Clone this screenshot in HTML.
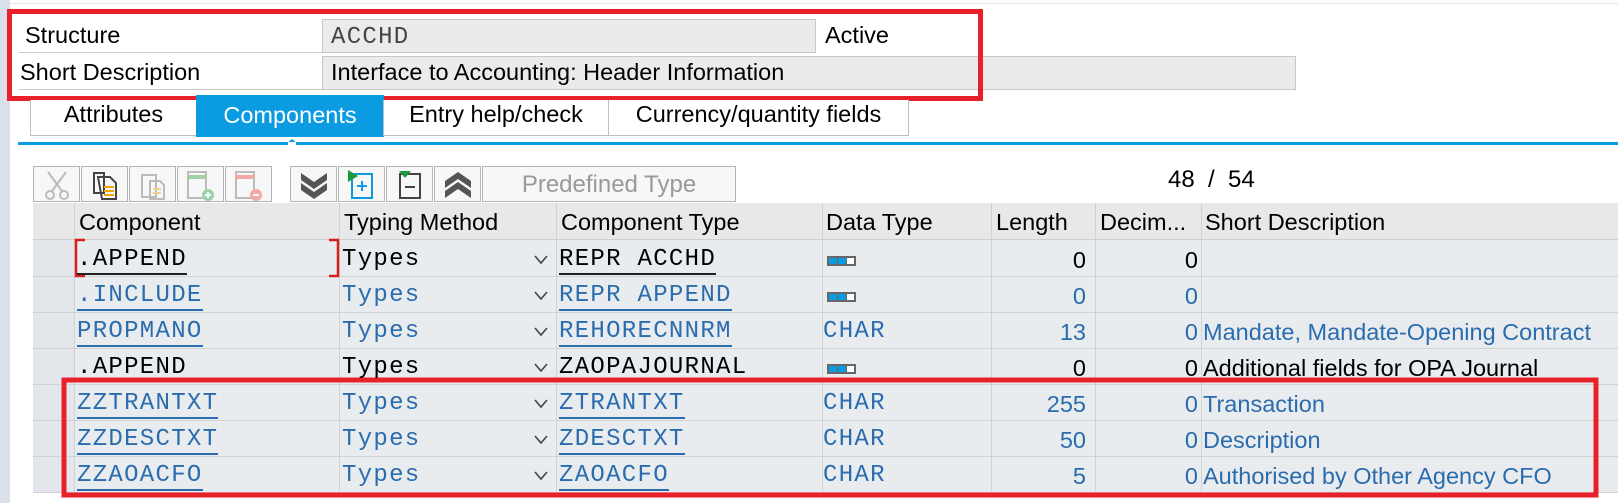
<!DOCTYPE html>
<html><head><meta charset="utf-8"><style>
*{margin:0;padding:0;box-sizing:border-box}
body{width:1618px;height:503px;background:#fff;position:relative;overflow:hidden;font-family:"Liberation Sans",sans-serif;font-size:23.5px;color:#000}
.a{position:absolute}
.mono{font-family:"Liberation Mono",monospace;font-size:24px;letter-spacing:1.3px}
.lbl{position:absolute;line-height:33px;white-space:nowrap}
.inp{position:absolute;background:#ebebeb;border:1px solid #c8c8c8;line-height:31px;padding-left:8px;white-space:nowrap}
.tab{position:absolute;top:100px;height:36px;border:1px solid #bfbfbf;border-top:none;background:#fff;line-height:28px;text-align:center}
.btn{position:absolute;top:166px;width:47px;height:36px;border:1px solid #b5b5b5;background:#f7f7f7}
.cell{position:absolute;height:36px;line-height:40px;white-space:nowrap}
.hd{line-height:36px}
.lnk{color:#2a6cad;border-bottom:2px solid #2a6cad}
.blk{border-bottom:2px solid #222}
.blue{color:#2a6cad}
</style></head><body>
<div class="a" style="left:0;top:0;width:10px;height:503px;background:#dbe0ea"></div>
<div class="a" style="left:10px;top:3px;width:1608px;height:1px;background:#e4e4e4"></div>

<div class="lbl" style="left:25px;top:19px">Structure</div>
<div class="a" style="left:18px;top:52px;width:304px;height:1px;background:#ccc"></div>
<div class="lbl" style="left:20px;top:56px">Short Description</div>
<div class="a" style="left:18px;top:89px;width:304px;height:1px;background:#ccc"></div>
<div class="inp mono" style="left:322px;top:19px;width:494px;height:34px;color:#444;line-height:35px">ACCHD</div>
<div class="lbl" style="left:825px;top:19px">Active</div>
<div class="inp" style="left:322px;top:56px;width:974px;height:34px">Interface to Accounting: Header Information</div>
<div class="a" style="left:7px;top:9px;width:976px;height:92px;border:5px solid #e8202a"></div>

<div class="tab" style="left:30px;width:167px">Attributes</div>
<div class="tab" style="left:196px;top:95px;height:42px;width:188px;background:#0a9be0;border:none;color:#fff;line-height:40px">Components</div>
<div class="tab" style="left:383px;width:226px">Entry help/check</div>
<div class="tab" style="left:608px;width:301px">Currency/quantity fields</div>
<div class="a" style="left:18px;top:142px;width:1600px;height:3px;background:#0a9be0"></div>
<div class="a" style="left:286px;top:139px;width:0;height:0;border-left:6px solid transparent;border-right:6px solid transparent;border-bottom:5px solid #0a9be0"></div>
<div class="a" style="left:288px;top:142px;width:8px;height:3px;background:#fff"></div>

<div class="btn" style="left:33px"><svg width="47" height="36"><g stroke="#bbb" stroke-width="2" fill="none"><path d="M14 5 L28 24 M32 5 L18 24"/><circle cx="16" cy="28" r="4"/><circle cx="30" cy="28" r="4"/></g></svg></div>
<div class="btn" style="left:81px"><svg width="47" height="36"><g stroke="#444" stroke-width="2" fill="none"><path d="M12 6h10v20h-10z M16 10h12l6 6v16h-14z"/></g><path d="M22 20h10M22 24h10M22 28h10" stroke="#f0a500" stroke-width="2"/></svg></div>
<div class="btn" style="left:129px"><svg width="47" height="36"><g stroke="#bbb" stroke-width="2" fill="none"><path d="M12 8h14v22h-14z M20 14h10l4 4v14h-14z"/></g><path d="M23 22h8M23 26h8" stroke="#eed48a" stroke-width="2"/></svg></div>
<div class="btn" style="left:177px"><svg width="47" height="36"><rect x="10" y="5" width="18" height="26" fill="none" stroke="#bbb" stroke-width="2"/><path d="M10 10h18" stroke="#9ed1a8" stroke-width="4"/><circle cx="30" cy="28" r="6" fill="#9ed1a8"/><path d="M27 28h6M30 25v6" stroke="#fff" stroke-width="2"/></svg></div>
<div class="btn" style="left:225px"><svg width="47" height="36"><rect x="10" y="5" width="18" height="26" fill="none" stroke="#bbb" stroke-width="2"/><path d="M10 10h18" stroke="#f0a8a8" stroke-width="4"/><circle cx="30" cy="28" r="6" fill="#f0a8a8"/><path d="M27 28h6" stroke="#fff" stroke-width="2"/></svg></div>

<div class="btn" style="left:290px"><svg width="47" height="36"><path d="M10 6l13 9 13-9v7l-13 9-13-9z M10 16l13 9 13-9v7l-13 9-13-9z" fill="#555"/></svg></div>
<div class="btn" style="left:338px"><svg width="47" height="36"><rect x="13" y="7" width="20" height="24" fill="none" stroke="#0a9be0" stroke-width="2"/><path d="M18 19h10M23 14v10" stroke="#0a9be0" stroke-width="2"/><path d="M9 3l10 6-10 6z" fill="#1a9a3a"/></svg></div>
<div class="btn" style="left:386px"><svg width="47" height="36"><rect x="13" y="7" width="20" height="24" fill="none" stroke="#444" stroke-width="2"/><path d="M18 20h10" stroke="#444" stroke-width="2"/><path d="M12 4h12l-6 7z" fill="#1a9a3a"/></svg></div>
<div class="btn" style="left:434px"><svg width="47" height="36"><path d="M10 14l13-9 13 9v7l-13-9-13 9z M10 24l13-9 13 9v7l-13-9-13 9z" fill="#555"/></svg></div>
<div class="btn" style="left:482px;width:254px;color:#999;text-align:center;line-height:36px;font-size:24px">Predefined Type</div>
<div class="lbl" style="left:1168px;top:163px;font-size:24px">48&nbsp;&nbsp;/&nbsp;&nbsp;54</div>

<!-- grid -->
<div class="a" style="left:33px;top:203px;width:1585px;height:37px;background:#e8e8e8;border-bottom:1px solid #cfcfcf"></div>
<div class="a" style="left:33px;top:240px;width:1585px;height:253px;background:#e9ecef"></div>
<div class="a" style="left:33px;top:240px;width:41px;height:253px;background:#e3e6ea"></div>
<div class="a" style="left:74px;top:203px;width:1px;height:290px;background:#d2d2d2"></div>
<div class="a" style="left:339px;top:203px;width:1px;height:290px;background:#d2d2d2"></div>
<div class="a" style="left:556px;top:203px;width:1px;height:290px;background:#d2d2d2"></div>
<div class="a" style="left:822px;top:203px;width:1px;height:290px;background:#d2d2d2"></div>
<div class="a" style="left:991px;top:203px;width:1px;height:290px;background:#d2d2d2"></div>
<div class="a" style="left:1095px;top:203px;width:1px;height:290px;background:#d2d2d2"></div>
<div class="a" style="left:1201px;top:203px;width:1px;height:290px;background:#d2d2d2"></div>
<div class="a" style="left:33px;top:276px;width:1585px;height:1px;background:#d2d2d2"></div>
<div class="a" style="left:33px;top:312px;width:1585px;height:1px;background:#d2d2d2"></div>
<div class="a" style="left:33px;top:348px;width:1585px;height:1px;background:#d2d2d2"></div>
<div class="a" style="left:33px;top:384px;width:1585px;height:1px;background:#d2d2d2"></div>
<div class="a" style="left:33px;top:420px;width:1585px;height:1px;background:#d2d2d2"></div>
<div class="a" style="left:33px;top:456px;width:1585px;height:1px;background:#d2d2d2"></div>
<div class="a" style="left:33px;top:492px;width:1585px;height:1px;background:#d2d2d2"></div>

<div class="cell hd" style="left:79px;top:204px">Component</div>
<div class="cell hd" style="left:344px;top:204px">Typing Method</div>
<div class="cell hd" style="left:561px;top:204px">Component Type</div>
<div class="cell hd" style="left:826px;top:204px">Data Type</div>
<div class="cell hd" style="left:996px;top:204px">Length</div>
<div class="cell hd" style="left:1100px;top:204px">Decim...</div>
<div class="cell hd" style="left:1205px;top:204px">Short Description</div>

<svg class="a" style="left:0;top:0" width="1618" height="503">
<defs><g id="dt"><rect x="0" y="0" width="29" height="10" fill="#666"/><rect x="2" y="2" width="8" height="6" fill="#0a9be0"/><rect x="11" y="2" width="8" height="6" fill="#0a9be0"/><rect x="20" y="2" width="7" height="6" fill="#fff"/></g>
<path id="ch" d="M0 0l6 7 6-7" fill="none" stroke="#444" stroke-width="1.6"/></defs>
<use href="#dt" x="827" y="256"/><use href="#dt" x="827" y="292"/><use href="#dt" x="827" y="364"/>
<use href="#ch" x="535" y="256"/><use href="#ch" x="535" y="292"/><use href="#ch" x="535" y="328"/><use href="#ch" x="535" y="364"/><use href="#ch" x="535" y="400"/><use href="#ch" x="535" y="436"/><use href="#ch" x="535" y="472"/>
<path d="M85 240h-9v36h9 M329 240h9v36h-9" fill="none" stroke="#d62020" stroke-width="2.5"/>
<rect x="64" y="380" width="1532" height="115" fill="none" stroke="#e8202a" stroke-width="5"/>
</svg>

<!-- rows -->
<div class="cell mono" style="left:77px;top:240px"><span class="blk">.APPEND</span></div>
<div class="cell mono" style="left:342px;top:240px">Types</div>
<div class="cell mono" style="left:559px;top:240px"><span class="blk">REPR&nbsp;ACCHD</span></div>
<div class="cell" style="left:996px;top:240px;width:90px;text-align:right">0</div>
<div class="cell" style="left:1100px;top:240px;width:98px;text-align:right">0</div>

<div class="cell mono" style="left:77px;top:276px"><span class="lnk">.INCLUDE</span></div>
<div class="cell mono blue" style="left:342px;top:276px">Types</div>
<div class="cell mono" style="left:559px;top:276px"><span class="lnk">REPR&nbsp;APPEND</span></div>
<div class="cell blue" style="left:996px;top:276px;width:90px;text-align:right">0</div>
<div class="cell blue" style="left:1100px;top:276px;width:98px;text-align:right">0</div>

<div class="cell mono" style="left:77px;top:312px"><span class="lnk">PROPMANO</span></div>
<div class="cell mono blue" style="left:342px;top:312px">Types</div>
<div class="cell mono" style="left:559px;top:312px"><span class="lnk">REHORECNNRM</span></div>
<div class="cell mono blue" style="left:823px;top:312px">CHAR</div>
<div class="cell blue" style="left:996px;top:312px;width:90px;text-align:right">13</div>
<div class="cell blue" style="left:1100px;top:312px;width:98px;text-align:right">0</div>
<div class="cell blue" style="left:1203px;top:312px">Mandate, Mandate-Opening Contract</div>

<div class="cell mono" style="left:77px;top:348px">.APPEND</div>
<div class="cell mono" style="left:342px;top:348px">Types</div>
<div class="cell mono" style="left:559px;top:348px">ZAOPAJOURNAL</div>
<div class="cell" style="left:996px;top:348px;width:90px;text-align:right">0</div>
<div class="cell" style="left:1100px;top:348px;width:98px;text-align:right">0</div>
<div class="cell" style="left:1203px;top:348px">Additional fields for OPA Journal</div>

<div class="cell mono" style="left:77px;top:384px"><span class="lnk">ZZTRANTXT</span></div>
<div class="cell mono blue" style="left:342px;top:384px">Types</div>
<div class="cell mono" style="left:559px;top:384px"><span class="lnk">ZTRANTXT</span></div>
<div class="cell mono blue" style="left:823px;top:384px">CHAR</div>
<div class="cell blue" style="left:996px;top:384px;width:90px;text-align:right">255</div>
<div class="cell blue" style="left:1100px;top:384px;width:98px;text-align:right">0</div>
<div class="cell blue" style="left:1203px;top:384px">Transaction</div>

<div class="cell mono" style="left:77px;top:420px"><span class="lnk">ZZDESCTXT</span></div>
<div class="cell mono blue" style="left:342px;top:420px">Types</div>
<div class="cell mono" style="left:559px;top:420px"><span class="lnk">ZDESCTXT</span></div>
<div class="cell mono blue" style="left:823px;top:420px">CHAR</div>
<div class="cell blue" style="left:996px;top:420px;width:90px;text-align:right">50</div>
<div class="cell blue" style="left:1100px;top:420px;width:98px;text-align:right">0</div>
<div class="cell blue" style="left:1203px;top:420px">Description</div>

<div class="cell mono" style="left:77px;top:456px"><span class="lnk">ZZAOACFO</span></div>
<div class="cell mono blue" style="left:342px;top:456px">Types</div>
<div class="cell mono" style="left:559px;top:456px"><span class="lnk">ZAOACFO</span></div>
<div class="cell mono blue" style="left:823px;top:456px">CHAR</div>
<div class="cell blue" style="left:996px;top:456px;width:90px;text-align:right">5</div>
<div class="cell blue" style="left:1100px;top:456px;width:98px;text-align:right">0</div>
<div class="cell blue" style="left:1203px;top:456px">Authorised by Other Agency CFO</div>
</body></html>
